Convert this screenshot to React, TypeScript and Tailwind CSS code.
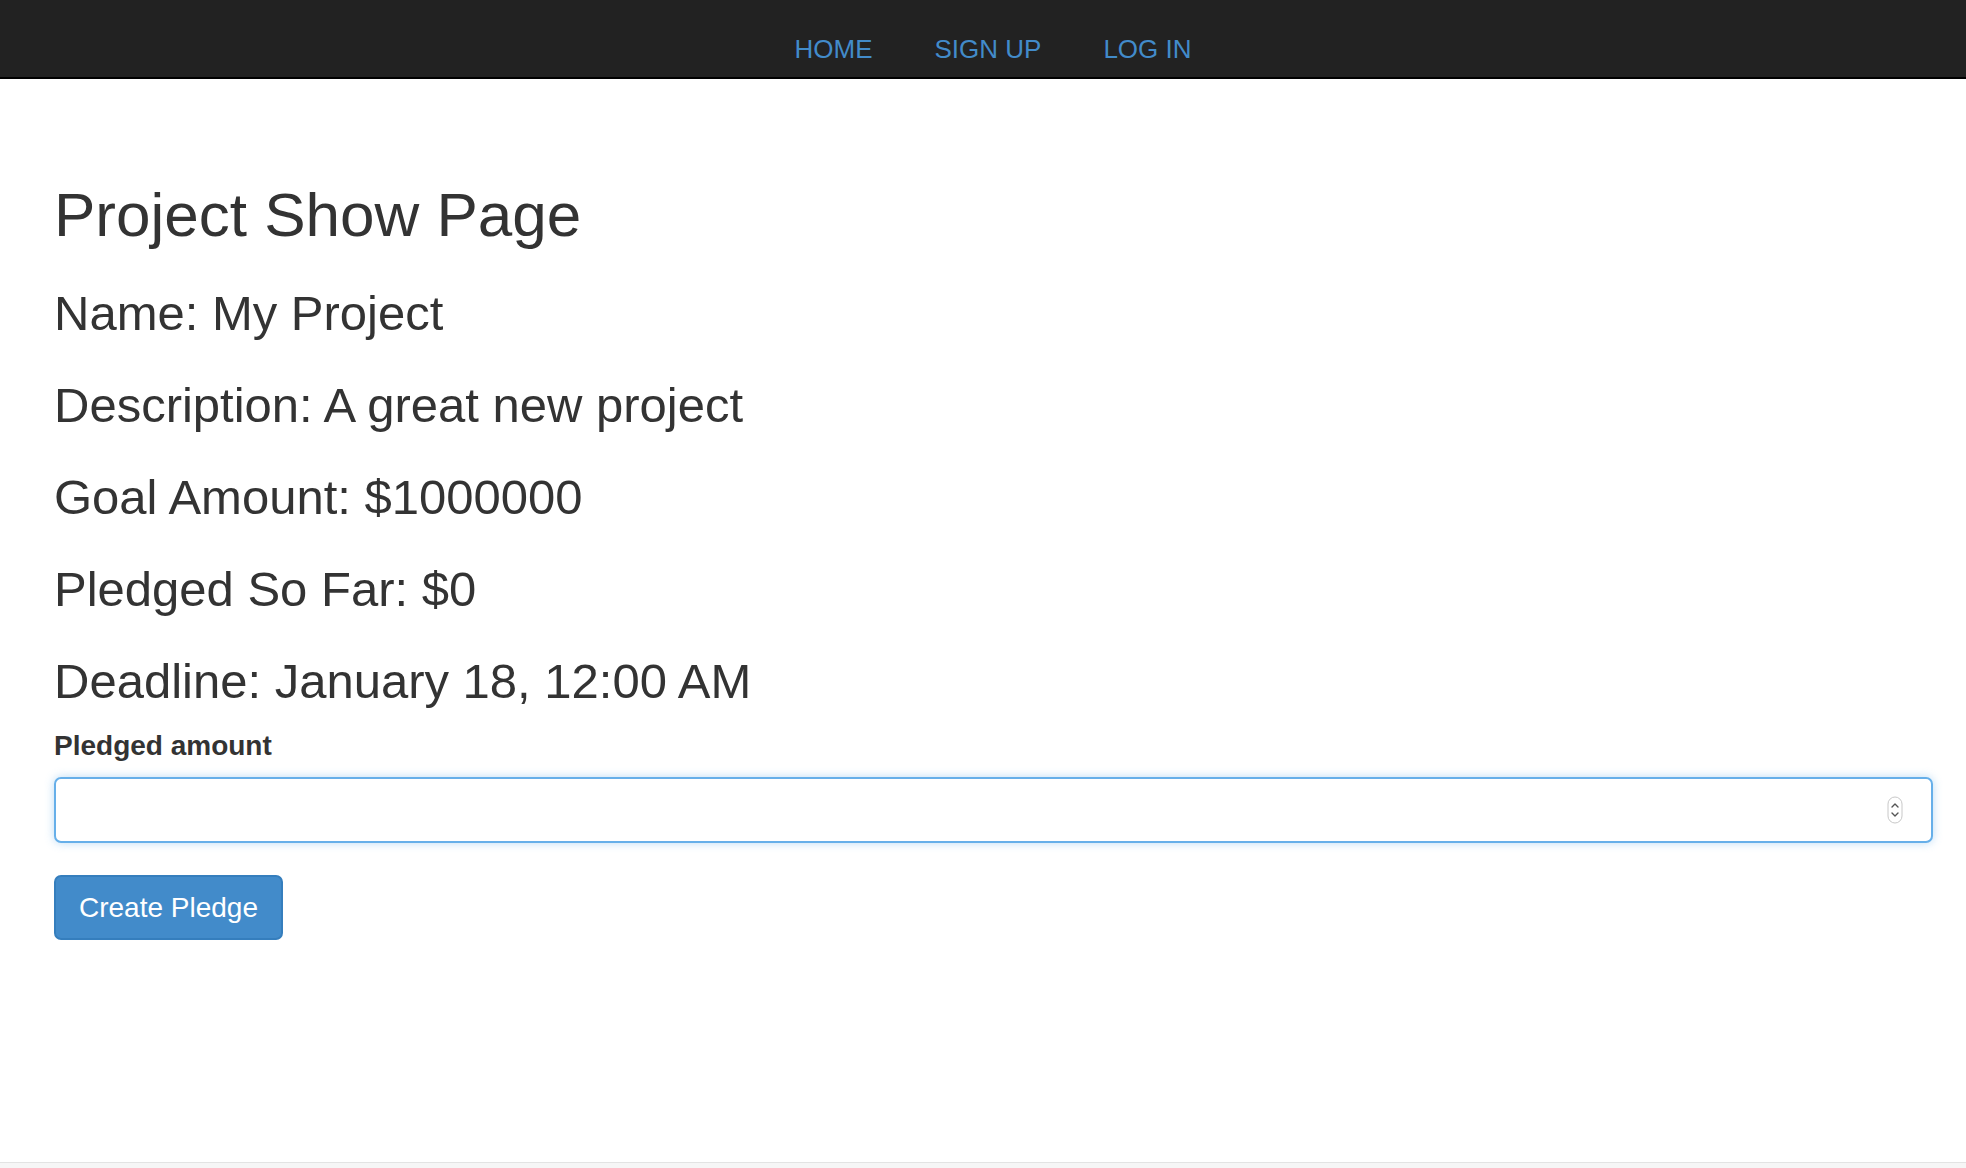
const navLinks = ['HOME', 'SIGN UP', 'LOG IN'];

const details = [
  'Name: My Project',
  'Description: A great new project',
  'Goal Amount: $1000000',
  'Pledged So Far: $0',
  'Deadline: January 18, 12:00 AM',
];

function SpinButton() {
  return (
    <svg width="16" height="28" viewBox="0 0 16 28" fill="none">
      <rect x="1" y="1" width="14" height="26" rx="7" fill="#fff" stroke="#c8c8c8" />
      <path d="M5 11 L8 8 L11 11" stroke="#555" strokeWidth="1.4" strokeLinecap="round" strokeLinejoin="round" />
      <path d="M5 17 L8 20 L11 17" stroke="#555" strokeWidth="1.4" strokeLinecap="round" strokeLinejoin="round" />
    </svg>
  );
}

export default function App() {
  return (
    <div className="min-h-screen flex flex-col bg-white text-[#333] font-['Liberation_Sans',Arial,sans-serif]">
      {/* Navbar */}
      <nav className="h-[79px] bg-[#222] border-b-2 border-black flex items-start justify-center gap-[62px] pl-[20px] pt-[34px]">
        {navLinks.map((link) => (
          <a key={link} href="#" className="text-[26px] leading-[30px] text-[#428bca]">
            {link}
          </a>
        ))}
      </nav>

      <main className="flex-1 pl-[54px] pr-[33px] pt-[102px]">
        <h1 className="text-[62px] leading-[67px] font-normal">Project Show Page</h1>

        {details.map((d) => (
          <p key={d} className="text-[49px] leading-[54px] mt-[38px]">
            {d}
          </p>
        ))}

        <form className="mt-[22px]" onSubmit={(e) => e.preventDefault()}>
          <label className="block text-[28px] leading-[32px] font-bold">Pledged amount</label>
          <div className="relative mt-[15px]">
            <input
              type="text"
              className="w-full h-[66px] rounded-[7px] border-2 border-[#66afe9] bg-white px-4 text-[28px] outline-none shadow-[0_0_10px_rgba(102,175,233,0.45)]"
            />
            <div className="absolute right-[30px] top-[19px]">
              <SpinButton />
            </div>
          </div>
          <button
            type="submit"
            className="mt-[32px] h-[65px] w-[229px] rounded-[7px] border-2 border-[#357ebd] bg-[#428bca] text-[28px] text-white"
          >
            Create Pledge
          </button>
        </form>
      </main>

      <footer className="h-[6px] border-t border-[#e3e3e3] bg-[#f6f6f6]" />
    </div>
  );
}
